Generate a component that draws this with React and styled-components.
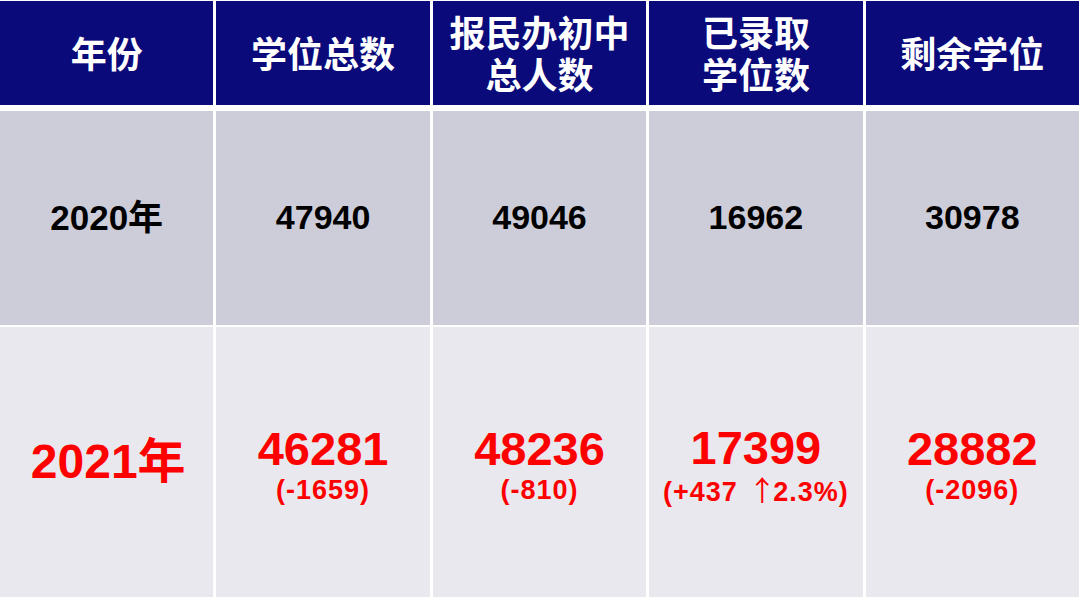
import styled, { createGlobalStyle } from 'styled-components';

const GlobalStyle = createGlobalStyle`
  html, body {
    margin: 0;
    padding: 0;
    background: #ffffff;
  }
  body {
    font-family: "Liberation Sans", "Noto Sans CJK SC", sans-serif;
  }
`;

const Table = styled.div`
  width: 1080px;
  height: 599px;
  box-sizing: border-box;
  padding: 1px 1px 2px 0;
  background: #ffffff;
  display: flex;
  flex-direction: column;
`;

const Row = styled.div`
  display: grid;
  grid-template-columns: repeat(5, 1fr);
  column-gap: 3px;
  height: ${p => p.$h}px;
  margin-bottom: ${p => p.$gap}px;
`;

const HeadCell = styled.div`
  background: #0a0a7a;
  color: #ffffff;
  display: flex;
  align-items: center;
  justify-content: center;
  text-align: center;
  font-family: "Noto Sans CJK SC", "Liberation Sans", sans-serif;
  font-weight: 700;
  font-size: 36px;
  line-height: 42px;
  padding-bottom: 2px;
`;

const Cell = styled.div`
  background: ${p => (p.$light ? '#e8e8ee' : '#cdcdd9')};
  display: flex;
  flex-direction: column;
  align-items: center;
  justify-content: center;
`;

const YearText = styled.div`
  font-family: "Liberation Sans", "Noto Sans CJK SC", sans-serif;
  font-weight: 700;
  font-size: ${p => (p.$red ? 48 : 35)}px;
  color: ${p => (p.$red ? '#ff0000' : '#000000')};
  line-height: 1.1;
  margin-left: ${p => (p.$red ? 3 : 0)}px;
`;

const Value = styled.div`
  font-family: "Liberation Sans", "Noto Sans CJK SC", sans-serif;
  font-weight: 700;
  font-size: 34px;
  color: #000000;
  line-height: 1.1;
`;

const BigValue = styled.div`
  font-family: "Liberation Sans", sans-serif;
  font-weight: 700;
  font-size: 47px;
  color: #ff0000;
  line-height: 50px;
  margin-top: 6px;
`;

const Delta = styled.div`
  font-family: "Liberation Sans", sans-serif;
  font-weight: 700;
  font-size: 27px;
  letter-spacing: 1px;
  color: #ff0000;
  line-height: 32px;
  white-space: pre;
`;

const Arrow = styled.span`
  font-family: "Noto Sans CJK SC", sans-serif;
  font-weight: 400;
  font-size: 28px;
  letter-spacing: 0;
  margin: 0 -3px 0 2px;
`;

const headers = [
  ['年份'],
  ['学位总数'],
  ['报民办初中', '总人数'],
  ['已录取', '学位数'],
  ['剩余学位'],
];

const row2020 = ['47940', '49046', '16962', '30978'];

const row2021 = [
  { v: '46281', d: '(-1659)' },
  { v: '48236', d: '(-810)' },
  { v: '17399', d: null },
  { v: '28882', d: '(-2096)' },
];

export default function App() {
  return (
    <>
      <GlobalStyle />
      <Table>
        <Row $h={104} $gap={6}>
          {headers.map((lines, i) => (
            <HeadCell key={i}>
              <div>
                {lines.map((l, j) => (
                  <div key={j}>{l}</div>
                ))}
              </div>
            </HeadCell>
          ))}
        </Row>
        <Row $h={214} $gap={2}>
          <Cell>
            <YearText>2020年</YearText>
          </Cell>
          {row2020.map(v => (
            <Cell key={v}>
              <Value>{v}</Value>
            </Cell>
          ))}
        </Row>
        <Row $h={270} $gap={0}>
          <Cell $light>
            <YearText $red>2021年</YearText>
          </Cell>
          {row2021.map(r => (
            <Cell $light key={r.v}>
              <BigValue>{r.v}</BigValue>
              <Delta>
                {r.d ? r.d : (
                  <>
                    (+437 <Arrow>↑</Arrow>2.3%)
                  </>
                )}
              </Delta>
            </Cell>
          ))}
        </Row>
      </Table>
    </>
  );
}
